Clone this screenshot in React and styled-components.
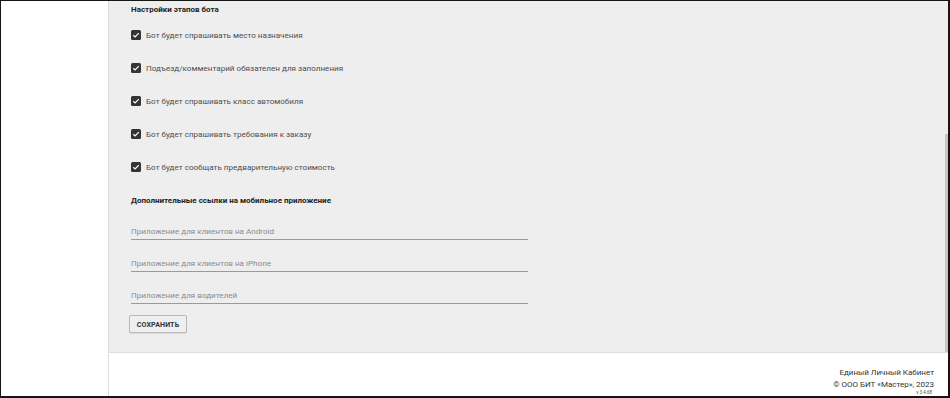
import React from "react";
import styled, { createGlobalStyle } from "styled-components";

const Global = createGlobalStyle`
  html, body { margin: 0; padding: 0; background: #fff; }
  * { box-sizing: border-box; }
  body { font-family: Roboto, "Liberation Sans", Arial, sans-serif; }
`;

const Frame = styled.div`
  width: 950px;
  height: 398px;
  border-style: solid;
  border-color: #151515;
  border-width: 1px 2px 2px 1px;
  display: grid;
  grid-template-columns: 108px 1fr;
  overflow: hidden;
  background: #fff;
`;

const Sidebar = styled.aside`
  background: #fff;
  border-right: 1px solid #dcdcdc;
`;

const Main = styled.div`
  display: flex;
  flex-direction: column;
  min-width: 0;
`;

const Scroller = styled.div`
  flex: 1;
  display: flex;
  background: #eeeeee;
  min-height: 0;
`;

const Content = styled.div`
  flex: 1;
  padding: 3px 22px 0 22px;
`;

const Scrollbar = styled.div`
  width: 4px;
  display: flex;
  flex-direction: column;
  padding-top: 133px;
`;

const Thumb = styled.div`
  flex: 1;
  margin-left: 1px;
  background: #c6c6c6;
`;

const Heading = styled.h3`
  margin: ${p => p.$top || 0}px 0 2px;
  font-size: 8px;
  line-height: 12px;
  font-weight: 700;
  color: #222;
`;

const CheckList = styled.div`
  display: flex;
  flex-direction: column;
`;

const CheckRow = styled.label`
  height: 33px;
  display: flex;
  align-items: center;
  gap: 5px;
  font-size: 8.1px;
  color: #4f4f4f;
`;

const Box = styled.span`
  width: 10px;
  height: 10px;
  border-radius: 1.5px;
  background: #343434;
  display: flex;
  align-items: center;
  justify-content: center;
  flex: none;
`;

const Field = styled.div`
  width: 397px;
  padding-top: ${p => p.$top}px;
  border-bottom: 1px solid #9a9a9a;
`;

const Placeholder = styled.div`
  font-size: 8.1px;
  line-height: 12px;
  padding-bottom: 2px;
  color: #8c8c8c;
`;

const Button = styled.button`
  margin: 11px 0 0 -2px;
  width: 58px;
  height: 18px;
  padding: 0;
  border: 1px solid #b9b9b9;
  border-radius: 2px;
  background: #efefef;
  box-shadow: 0 1px 1px rgba(0,0,0,0.08);
  font-family: inherit;
  font-size: 7.1px;
  font-weight: 700;
  color: #333;
  letter-spacing: 0.1px;
`;

const Footer = styled.footer`
  height: 44px;
  border-top: 1px solid #dedede;
  display: flex;
  flex-direction: column;
  align-items: flex-end;
  padding: 14px 14px 0 0;
  color: #333;
`;

const FootLine = styled.div`
  font-size: 8px;
  line-height: 12px;
`;

const Version = styled.div`
  font-size: 4.5px;
  line-height: 4px;
  margin-right: 2px;
  color: #444;
`;

const Check = () => (
  <svg width="8" height="8" viewBox="0 0 8 8">
    <path d="M1.3 4.2 L3.1 5.9 L6.8 2.1" fill="none" stroke="#fff" strokeWidth="1.2" />
  </svg>
);

const items = [
  "Бот будет спрашивать место назначения",
  "Подъезд/комментарий обязателен для заполнения",
  "Бот будет спрашивать класс автомобиля",
  "Бот будет спрашивать требования к заказу",
  "Бот будет сообщать предварительную стоимость",
];

const fields = [
  "Приложение для клиентов на Android",
  "Приложение для клиентов на iPhone",
  "Приложение для водителей",
];

export default function App() {
  return (
    <>
      <Global />
      <Frame>
        <Sidebar />
        <Main>
          <Scroller>
            <Content>
              <Heading>Настройки этапов бота</Heading>
              <CheckList>
                {items.map(t => (
                  <CheckRow key={t}>
                    <Box><Check /></Box>
                    {t}
                  </CheckRow>
                ))}
              </CheckList>
              <Heading $top={12}>Дополнительные ссылки на мобильное приложение</Heading>
              {fields.map((f, i) => (
                <Field key={f} $top={i === 0 ? 16 : 17}>
                  <Placeholder>{f}</Placeholder>
                </Field>
              ))}
              <Button>СОХРАНИТЬ</Button>
            </Content>
            <Scrollbar><Thumb /></Scrollbar>
          </Scroller>
          <Footer>
            <FootLine>Единый Личный Кабинет</FootLine>
            <FootLine>© ООО БИТ «Мастер», 2023</FootLine>
            <Version>v 3.4.68</Version>
          </Footer>
        </Main>
      </Frame>
    </>
  );
}
